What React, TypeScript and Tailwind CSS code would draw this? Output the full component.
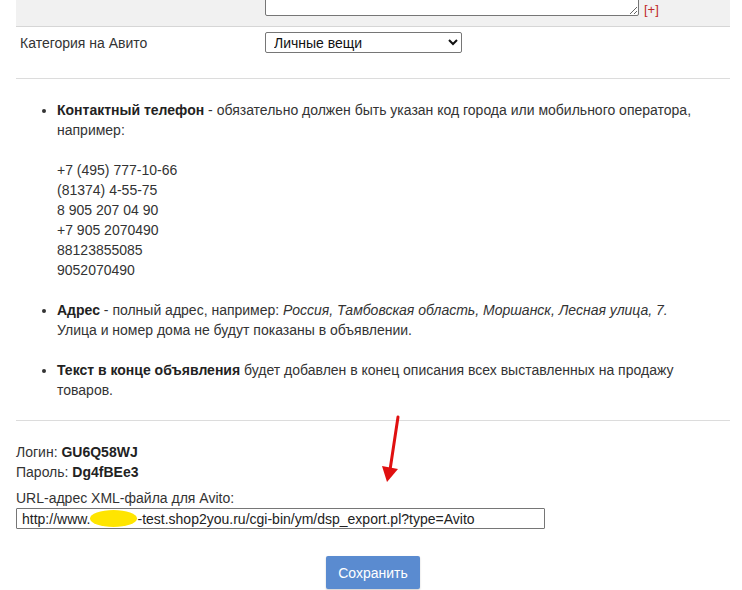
import React from "react";

export default function App() {
  return (
    <div
      className="relative w-[742px] h-[590px] overflow-hidden bg-white text-[14px] leading-[20px] text-[#333]"
      style={{ fontFamily: '"Liberation Sans", Arial, sans-serif' }}
    >
      {/* top gray band with textarea */}
      <div className="ml-[16px] mr-[12px] h-[27px] overflow-hidden border-b border-[#d6d6d6] bg-[#f1f1f1]">
        <div className="flex items-end pl-[249px]">
          <textarea
            readOnly
            className="mt-[-26px] block h-[42px] w-[374px] rounded-[2px] border border-[#767676] bg-white"
          />
          <span className="mb-[-4px] ml-[5px] text-[13px] text-[#c02a2a]">[+]</span>
        </div>
      </div>

      {/* category row */}
      <div className="ml-[16px] mr-[12px] flex items-start pt-[6px] h-[52px] border-b border-[#dcdcdc]">
        <div className="w-[249px] pl-[4px] text-[#333]">Категория на Авито</div>
        <select
          defaultValue="l"
          className="mt-[-1px] h-[21px] w-[197px] rounded-[2px] border border-[#767676] bg-white pl-[4px] text-[14px] text-[#111]"
          style={{ fontFamily: '"Liberation Sans", Arial, sans-serif' }}
        >
          <option value="l">Личные вещи</option>
        </select>
      </div>

      {/* info list */}
      <div className="ml-[16px] mr-[12px] border-b border-[#dcdcdc] pb-[20px] pt-[21px]">
        <ul className="list-disc pl-[41px]">
          <li>
            <b className="text-[#222]">Контактный телефон</b> - обязательно должен быть указан код города или
            мобильного оператора, например:
            <div className="mt-[20px]">
              <div>+7 (495) 777-10-66</div>
              <div>(81374) 4-55-75</div>
              <div>8 905 207 04 90</div>
              <div>+7 905 2070490</div>
              <div>88123855085</div>
              <div>9052070490</div>
            </div>
          </li>
          <li className="mt-[20px]">
            <b className="text-[#222]">Адрес</b> - полный адрес, например:{" "}
            <i>Россия, Тамбовская область, Моршанск, Лесная улица, 7.</i>
            <br />
            Улица и номер дома не будут показаны в объявлении.
          </li>
          <li className="mt-[20px]">
            <b className="text-[#222]">Текст в конце объявления</b> будет добавлен в конец описания всех
            выставленных на продажу товаров.
          </li>
        </ul>
      </div>

      {/* credentials */}
      <div className="ml-[16px] mr-[12px] pt-[21px]">
        <div>
          Логин: <b className="text-[#222]">GU6Q58WJ</b>
        </div>
        <div>
          Пароль: <b className="text-[#222]">Dg4fBEe3</b>
        </div>
        <div className="mt-[6px]">URL-адрес XML-файла для Avito:</div>
        <div className="flex h-[21px] w-[529px] items-center rounded-[1px] border border-[#767676] pl-[5px] text-[14px] text-[#222] whitespace-nowrap">
          http://www.
          <span className="inline-block h-[17px] w-[47px] rounded-[50%] bg-[#ffe500]" />
          -test.shop2you.ru/cgi-bin/ym/dsp_export.pl?type=Avito
        </div>
        <div className="mt-[27px] flex justify-center">
          <button className="h-[33px] w-[94px] rounded-[2px] bg-[#5a8bd0] text-[14px] text-white shadow-[0_1px_2px_rgba(0,0,0,0.2)]">
            Сохранить
          </button>
        </div>
      </div>

      {/* red arrow annotation */}
      <svg className="absolute left-[378px] top-[412px]" width="30" height="75" viewBox="0 0 30 75">
        <line x1="20" y1="5" x2="12" y2="58" stroke="#e01010" strokeWidth="3" strokeLinecap="round" />
        <polygon points="4,54 20,57 9,70" fill="#e01010" />
      </svg>
    </div>
  );
}
